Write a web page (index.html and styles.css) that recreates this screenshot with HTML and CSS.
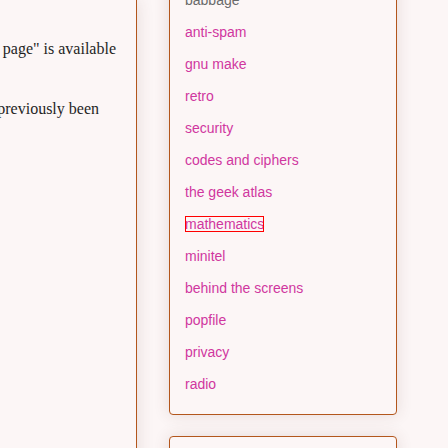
FILE: index.html
```html
<!DOCTYPE html>
<html lang="en">
<head>
<meta charset="utf-8">
<title>Sidebar</title>
<link rel="stylesheet" href="styles.css">
</head>
<body>
<div class="layout">
  <main class="main">
    <p class="line first"><span>the "babbage page" is available</span></p>
    <p class="line second"><span>which had previously been</span></p>
  </main>
  <aside class="aside">
    <nav class="card tags">
      <ul class="tag-list">
        <li><a class="tag visited" href="#">babbage</a></li>
        <li><a class="tag" href="#">anti-spam</a></li>
        <li><a class="tag" href="#">gnu make</a></li>
        <li><a class="tag" href="#">retro</a></li>
        <li><a class="tag" href="#">security</a></li>
        <li><a class="tag" href="#">codes and ciphers</a></li>
        <li><a class="tag" href="#">the geek atlas</a></li>
        <li><a class="tag focused" href="#">mathematics</a></li>
        <li><a class="tag" href="#">minitel</a></li>
        <li><a class="tag" href="#">behind the screens</a></li>
        <li><a class="tag" href="#">popfile</a></li>
        <li><a class="tag" href="#">privacy</a></li>
        <li><a class="tag" href="#">radio</a></li>
      </ul>
    </nav>
    <section class="card next"></section>
  </aside>
</div>
</body>
</html>
```
FILE: styles.css
```css
html, body {
  margin: 0;
  padding: 0;
  background: #fcf6f6;
  overflow: hidden;
  height: 448px;
}

.layout {
  display: flex;
  align-items: flex-start;
  gap: 32px;
}

.main {
  width: 136px;
  min-height: 520px;
  flex: none;
  background: #fcf6f6;
  border-right: 1px solid #b3561c;
  box-shadow: 0 0 16px rgba(90, 50, 40, 0.14);
  padding-top: 37px;
  overflow: hidden;
  font-family: "Liberation Serif", serif;
  font-size: 16px;
  line-height: 24px;
  color: #1f1f1f;
}

.line {
  margin: 0;
  display: flex;
  justify-content: flex-end;
  white-space: nowrap;
}

.line.first {
  padding-right: 20px;
}

.line.second {
  margin-top: 36px;
  padding-right: 37px;
}

.aside {
  width: 228px;
  flex: none;
  margin-top: -31px;
  display: flex;
  flex-direction: column;
  gap: 21px;
}

.card {
  background: #fcf6f6;
  border: 1px solid #b3561c;
  border-radius: 4px;
  box-shadow: 0 0 16px rgba(90, 50, 40, 0.14);
}

.tags {
  padding: 14px 15px 14px;
}

.tag-list {
  list-style: none;
  margin: 0;
  padding: 0;
  font-family: "Liberation Sans", Arial, sans-serif;
  font-size: 14px;
  line-height: 32px;
}

.tag {
  color: #d0379f;
  text-decoration: none;
}

.tag.visited {
  color: #6a6a6a;
}

.tag.focused {
  outline: 1px solid #ff0000;
  outline-offset: -1px;
}

.next {
  height: 120px;
}
```
